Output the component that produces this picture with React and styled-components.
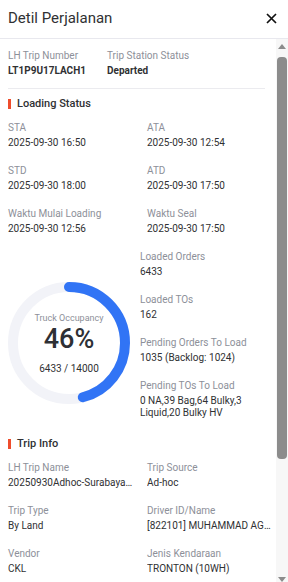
import styled, { createGlobalStyle } from 'styled-components'

const GlobalStyle = createGlobalStyle`
  * {
    margin: 0;
    padding: 0;
    box-sizing: border-box;
  }
  body {
    background: #fff;
    font-family: Roboto, 'Liberation Sans', sans-serif;
    color: #333;
  }
`

const Panel = styled.div`
  display: flex;
  flex-direction: column;
  width: 288px;
  height: 582px;
  background: #fff;
`

const Header = styled.div`
  display: flex;
  align-items: center;
  justify-content: space-between;
  height: 39px;
  padding: 0 11px 2px 8px;
  border-bottom: 1px solid #e8e8ee;
  flex-shrink: 0;
`

const Title = styled.h2`
  font-size: 15px;
  font-weight: 400;
  color: #303133;
`

const CloseButton = styled.button`
  display: flex;
  border: none;
  background: none;
  cursor: pointer;
`

const BodyRow = styled.div`
  flex: 1;
  min-height: 0;
  display: flex;
`

const Body = styled.div`
  flex: 1;
  min-width: 0;
  overflow: hidden;
  padding: 10px 11px 27px 8px;
`

const ScrollTrack = styled.div`
  width: 12px;
  flex-shrink: 0;
  display: flex;
  flex-direction: column;
  align-items: center;
  padding-top: 5px;
  background: #f7f7f7;
`

const Arrow = styled.div`
  width: 0;
  height: 0;
  border-left: 4px solid transparent;
  border-right: 4px solid transparent;
  ${(p) =>
    p.$down
      ? 'border-top: 5px solid #8c8c8c; margin-top: auto;'
      : 'border-bottom: 5px solid #8c8c8c;'}
`

const Thumb = styled.div`
  width: 10px;
  height: 402px;
  margin-top: 8px;
  border-radius: 4px;
  background: #8c8c8c;
`

const TopRow = styled.div`
  display: flex;
  padding-bottom: 11px;
  border-bottom: 1px solid #ebebef;
`

const TopField = styled.div`
  width: ${(p) => p.$w || 'auto'};
`

const SectionTitle = styled.h3`
  display: flex;
  align-items: center;
  gap: 6px;
  margin: ${(p) => p.$top || 7}px 0 9px;
  font-size: 11px;
  line-height: 16px;
  font-weight: 500;
  color: #303133;

  &::before {
    content: '';
    width: 3px;
    height: 10px;
    background: #ee4d2d;
  }
`

const Grid = styled.div`
  display: grid;
  grid-template-columns: 139px 1fr;
  margin-right: -6px;
`

const Field = styled.div`
  min-width: 0;
  margin-bottom: ${(p) => (p.$last ? 0 : 15)}px;

  ${Grid} > &:nth-child(odd) {
    padding-right: 14px;
  }
`

const Label = styled.div`
  font-size: 10px;
  line-height: 14px;
  color: #8d9099;
  white-space: nowrap;
`

const Value = styled.div`
  margin-top: 2px;
  font-size: 10px;
  line-height: 12px;
  font-weight: ${(p) => (p.$bold ? 700 : 400)};
  color: #303133;
  white-space: ${(p) => (p.$wrap ? 'normal' : 'nowrap')};
  overflow: hidden;
  text-overflow: ellipsis;
`

const StatsRow = styled.div`
  display: flex;
`

const DonutWrap = styled.div`
  position: relative;
  width: 132px;
  height: 122px;
  flex-shrink: 0;
  align-self: flex-end;
  margin-bottom: 15px;
`

const DonutText = styled.div`
  position: absolute;
  left: 0;
  top: 0;
  width: 122px;
  height: 122px;
  display: flex;
  flex-direction: column;
  align-items: center;
  justify-content: center;
`

const DonutCaption = styled.div`
  font-size: 9px;
  line-height: 12px;
  color: #8d9099;
`

const Percent = styled.div`
  font-size: 27px;
  line-height: 32px;
  font-weight: 500;
  color: #2e3035;
  margin-top: -1px;
`

const Ratio = styled.div`
  font-size: 10px;
  line-height: 12px;
  color: #303133;
  margin-top: 8px;
`

const StatsCol = styled.div`
  display: flex;
  flex-direction: column;
  width: 130px;
`

const Donut = ({ pct }) => {
  const r = 56
  const c = 2 * Math.PI * r
  return (
    <svg width="122" height="122" viewBox="0 0 122 122">
      <circle cx="61" cy="61" r={r} fill="none" stroke="#f2f3f8" strokeWidth="10" />
      <circle
        cx="61"
        cy="61"
        r={r}
        fill="none"
        stroke="#3174f5"
        strokeWidth="10"
        strokeLinecap="round"
        strokeDasharray={`${c * pct} ${c}`}
        transform="rotate(-90 61 61)"
      />
    </svg>
  )
}

const loading = [
  ['STA', '2025-09-30 16:50'],
  ['ATA', '2025-09-30 12:54'],
  ['STD', '2025-09-30 18:00'],
  ['ATD', '2025-09-30 17:50'],
  ['Waktu Mulai Loading', '2025-09-30 12:56'],
  ['Waktu Seal', '2025-09-30 17:50'],
]

const stats = [
  ['Loaded Orders', '6433'],
  ['Loaded TOs', '162'],
  ['Pending Orders To Load', '1035 (Backlog: 1024)'],
  ['Pending TOs To Load', '0 NA,39 Bag,64 Bulky,3 Liquid,20 Bulky HV'],
]

const tripInfo = [
  ['LH Trip Name', '20250930Adhoc-Surabaya-Jakarta-01'],
  ['Trip Source', 'Ad-hoc'],
  ['Trip Type', 'By Land'],
  ['Driver ID/Name', '[822101] MUHAMMAD AGUS SAPUTRA'],
  ['Vendor', 'CKL'],
  ['Jenis Kendaraan', 'TRONTON (10WH)'],
  ['Nomor Polisi', 'L 9123 UK'],
  ['Trip Status', 'Departed'],
]

const App = () => {
  return (
    <>
      <GlobalStyle />
      <Panel>
        <Header>
          <Title>Detil Perjalanan</Title>
          <CloseButton aria-label="close">
            <svg width="11" height="11" viewBox="0 0 11 11">
              <path d="M1 1L10 10M10 1L1 10" stroke="#111" strokeWidth="1.7" />
            </svg>
          </CloseButton>
        </Header>
        <BodyRow>
          <Body>
            <TopRow>
              <TopField $w="99px">
                <Label>LH Trip Number</Label>
                <Value $bold>LT1P9U17LACH1</Value>
              </TopField>
              <TopField>
                <Label>Trip Station Status</Label>
                <Value $bold>Departed</Value>
              </TopField>
            </TopRow>

            <SectionTitle>Loading Status</SectionTitle>
            <Grid>
              {loading.map(([l, v]) => (
                <Field key={l}>
                  <Label>{l}</Label>
                  <Value>{v}</Value>
                </Field>
              ))}
            </Grid>

            <StatsRow>
              <DonutWrap>
                <Donut pct={6433 / 14000} />
                <DonutText>
                  <DonutCaption>Truck Occupancy</DonutCaption>
                  <Percent>46%</Percent>
                  <Ratio>6433 / 14000</Ratio>
                </DonutText>
              </DonutWrap>
              <StatsCol>
                {stats.map(([l, v], i) => (
                  <Field key={l} $last={i === stats.length - 1}>
                    <Label>{l}</Label>
                    <Value $wrap>{v}</Value>
                  </Field>
                ))}
              </StatsCol>
            </StatsRow>

            <SectionTitle $top={17}>Trip Info</SectionTitle>
            <Grid>
              {tripInfo.map(([l, v]) => (
                <Field key={l}>
                  <Label>{l}</Label>
                  <Value>{v}</Value>
                </Field>
              ))}
            </Grid>
          </Body>
          <ScrollTrack aria-hidden="true">
            <Arrow />
            <Thumb />
            <Arrow $down />
          </ScrollTrack>
        </BodyRow>
      </Panel>
    </>
  )
}

export default App
